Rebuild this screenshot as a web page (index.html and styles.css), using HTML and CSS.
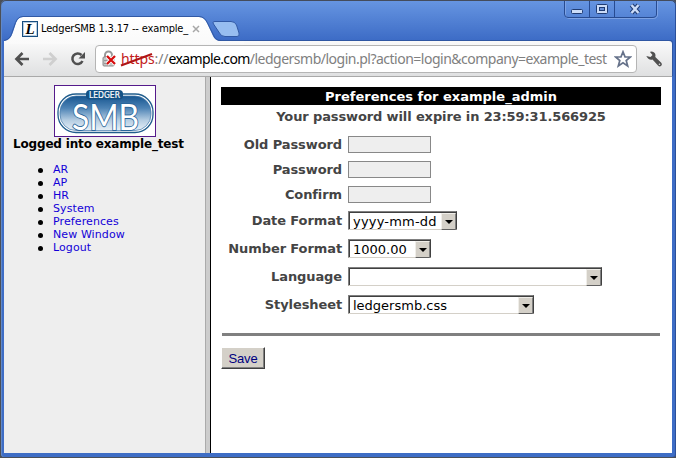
FILE: index.html
```html
<!DOCTYPE html>
<html lang="en">
<head>
<meta charset="utf-8">
<title>LedgerSMB 1.3.17 -- example_test</title>
<link rel="stylesheet" href="styles.css">
</head>
<body>
<div class="window">
  <header class="tabstrip">
    <svg class="tabshape" width="240" height="28" viewBox="0 0 240 28">
      <defs><linearGradient id="tab" x1="0" y1="0" x2="0" y2="1"><stop offset="0" stop-color="#fff"/><stop offset="1" stop-color="#fafafa"/></linearGradient></defs>
      <path d="M0 28V25C6 24 7 21 9 16L12 7Q14 1 19 1H195Q200 1 203 7L209 20Q211 25 217 25H240V28Z" fill="url(#tab)"/>
      <path d="M0 24.500C6 23 7 20 8.500 15L11.500 6.500Q14 .5 19 .5H195Q200.500 .5 203.500 7L209.500 19Q211.500 24.500 217 24.500H240" fill="none" stroke="#3159a5"/>
      <path d="M211 5.500H227Q231 5.500 232.500 9L235 17Q236 20.500 233 20.500H221Q217 20.500 215.500 17L209.500 8Q208 5.500 211 5.500Z" fill="#97bdf0" stroke="#3159a5"/>
    </svg>
    <div class="tab">
      <span class="favicon">L</span>
      <span class="tabtitle">LedgerSMB 1.3.17 -- example_</span>
      <svg class="tabclose" width="8" height="8" viewBox="0 0 8 8"><path d="M1 1L7 7M7 1L1 7" stroke="#a8a8a8" stroke-width="1.500"/></svg>
    </div>
    <svg class="winbtns" width="94" height="20" viewBox="0 0 94 20">
      <path d="M1.500 1V15Q1.500 18.500 5 18.500H89Q93.500 18.500 93.500 15V1" fill="none" stroke="#7da2e4"/>
      <path d="M.5 1V14Q.5 17.500 4 17.500H88Q92.500 17.500 92.500 14V1M25.500 1V17M50.500 1V17" fill="none" stroke="#274b91"/>
      <rect x="7.500" y="9.500" width="11" height="4" rx="1" fill="#cbdcf8" stroke="#203c73"/>
      <rect x="32.500" y="4.500" width="11" height="9" rx="1" fill="#cbdcf8" stroke="#203c73"/>
      <rect x="35.500" y="7.500" width="5" height="3" fill="#6a91d9" stroke="#203c73"/>
      <path d="M67.500 5L74.500 13M74.500 5L67.500 13" stroke="#203c73" stroke-width="4.500"/>
      <path d="M67.500 5L74.500 13M74.500 5L67.500 13" stroke="#cbdcf8" stroke-width="2.500"/>
    </svg>
  </header>
  <nav class="toolbar">
    <svg class="navicons" width="76" height="20" viewBox="0 0 76 20">
      <path d="M15 10H3M8.500 4L2.500 10L8.500 16" fill="none" stroke="#505050" stroke-width="2.700"/>
      <path d="M29 10H41M35.500 4L41.500 10L35.500 16" fill="none" stroke="#cfcfcf" stroke-width="2.700"/>
      <path d="M67.500 6A5.300 5.300 0 1 0 68.500 12" fill="none" stroke="#505050" stroke-width="2.500"/>
      <path d="M71 3V9.500H64.500Z" fill="#505050"/>
    </svg>
    <div class="omnibox">
      <svg class="lock" width="15" height="18" viewBox="0 0 15 18">
        <path d="M3 8V5A3.500 3.500 0 0 1 10 5V8" fill="none" stroke="#999" stroke-width="2"/>
        <rect x="1" y="7" width="11" height="9" rx="1" fill="#c5c5c5" stroke="#8a8a8a"/>
        <path d="M2 10.500H11M2 13.500H11" stroke="#999"/>
        <path d="M5 6L13 14M13 6L5 14" stroke="#fff" stroke-width="4"/>
        <path d="M5 6L13 14M13 6L5 14" stroke="#d60d0d" stroke-width="2.300"/>
      </svg>
      <span class="url"><span class="scheme">https<svg class="strike" width="34" height="14" viewBox="0 0 34 14"><path d="M1 12.500L32 1" stroke="#b01515" stroke-width="2"/></svg></span><span class="sep">://</span><span class="host">example.com</span>/ledgersmb/login.pl?action=login&amp;company=example_test</span>
      <svg class="star" width="18" height="18" viewBox="0 0 18 18"><path d="M9 1.800L11 6.800L16.300 7L12.200 10.500L13.700 16L9 12.800L4.300 16L5.800 10.500L1.700 7L7 6.800Z" fill="#fff" stroke="#66728a" stroke-width="1.700"/></svg>
    </div>
    <svg class="wrench" width="18" height="18" viewBox="0 0 18 18"><path d="M6 1.500Q10 1.500 10.500 5L10.300 7L16.500 13Q17.500 15 16 16Q14.500 17 13 15.500L7.500 9.500Q3.500 10.500 1.300 6L5.500 7L7.500 5L5 2Z" fill="#505050"/><circle cx="14.500" cy="14.300" r=".8" fill="#ddd"/></svg>
  </nav>
  <div class="frames">
    <aside class="sidebar">
      <svg class="logo" width="102" height="52" viewBox="0 0 102 52">
        <defs>
          <linearGradient id="pill" x1="0" y1="0" x2="0" y2="1"><stop offset="0" stop-color="#175690"/><stop offset=".35" stop-color="#4d83b5"/><stop offset=".7" stop-color="#b5cde2"/><stop offset="1" stop-color="#e7f0f7"/></linearGradient>
        </defs>
        <rect x=".5" y=".5" width="101" height="51" fill="#fff" stroke="#551a8b"/>
        <rect x="4" y="9" width="95" height="38.500" rx="18" fill="#fff" stroke="#205d8d" stroke-width="1.300"/>
        <rect x="6" y="11" width="91" height="34.500" rx="16" fill="url(#pill)" stroke="#4279aa" stroke-width=".7"/>
        <rect x="32" y="5" width="37" height="9.500" rx="4" fill="#145286"/>
        <text class="logo-top" x="35" y="12.500" textLength="31" lengthAdjust="spacingAndGlyphs">LEDGER</text>
        <text class="logo-main" x="18" y="44.500" textLength="67" lengthAdjust="spacingAndGlyphs">SMB</text>
      </svg>
      <div class="who">Logged into example_test</div>
      <ul class="menu">
        <li><a>AR</a></li><li><a>AP</a></li><li><a>HR</a></li><li><a>System</a></li><li><a>Preferences</a></li><li><a>New Window</a></li><li><a>Logout</a></li>
      </ul>
    </aside>
    <div class="divider"></div>
    <main class="main">
      <h1 class="title"><span>Preferences for example_admin</span></h1>
      <p class="expiry">Your password will expire in 23:59:31.566925</p>
      <div class="form">
        <label>Old Password</label><div class="field"></div>
        <label>Password</label><div class="field"></div>
        <label>Confirm</label><div class="field"></div>
        <label>Date Format</label><div class="select date"><span>yyyy-mm-dd</span><i class="drop"></i></div>
        <label>Number Format</label><div class="select number"><span>1000.00</span><i class="drop"></i></div>
        <label>Language</label><div class="select language"><span></span><i class="drop"></i></div>
        <label>Stylesheet</label><div class="select sheet"><span>ledgersmb.css</span><i class="drop"></i></div>
      </div>
      <div class="rule"></div>
      <button class="save">Save</button>
    </main>
  </div>
</div>
</body>
</html>
```
FILE: styles.css
```css
* { box-sizing: border-box; }
body { margin: 0; background: #4b4f57; font-family: "DejaVu Sans", sans-serif; }
svg { display: block; flex: none; }
.window {
  width: 675px; height: 457px; margin-left: 1px;
  padding: 0 4px 4px 3px;
  display: flex; flex-direction: column;
  background: linear-gradient(#6796e2 0, #3d6cc6 40px, #3e6dc5 100%);
  border-radius: 5px 5px 3px 3px;
  box-shadow: inset 0 1px #444c5c, inset 1px 0 #6189c9, inset -1px 0 #2b509b;
}
.tabstrip { position: relative; height: 41px; display: flex; justify-content: space-between; align-items: flex-start; }
.tabshape { position: absolute; left: 0; top: 16px; }
.tab { position: relative; display: flex; align-items: center; height: 16px; margin: 21px 0 0 18px; }
.favicon {
  width: 16px; height: 16px; border: 1px solid #174d80;
  background: #fff; box-shadow: inset 0 0 0 1px #b9cee0;
  font: italic bold 15px/14px "Liberation Serif", serif; text-align: center;
}
.tabtitle { width: 150px; margin-left: 3px; font: 11px/16px "DejaVu Sans Condensed", "DejaVu Sans", sans-serif; letter-spacing: -.15px; white-space: nowrap; }
.tabclose { margin-left: 1px; }
.winbtns { margin-right: 14px; }
.toolbar {
  height: 36px; display: flex; align-items: center;
  background: linear-gradient(#fafafa, #dfe0e1); border-bottom: 1px solid #a9a9a9;
  border-radius: 0 3px 0 0; box-shadow: 1px -1px #2f57a3;
}
.navicons { margin-left: 10px; }
.omnibox {
  flex: none; width: 542px; height: 28px; margin-left: 5px; padding: 0 4px 0 6px;
  display: flex; align-items: center;
  background: #fff; border: 1px solid #b5b5b5; border-radius: 4px;
}
.url { flex: 1; min-width: 0; margin-left: 4px; font: 14px/20px "Noto Sans", sans-serif; letter-spacing: -.5px; color: #808080; white-space: nowrap; }
.scheme { position: relative; color: #c22020; letter-spacing: -.1px; }
.sep { letter-spacing: -.1px; }
.strike { position: absolute; left: -1px; top: 4px; }
.host { color: #000; letter-spacing: -.62px; }
.wrench { margin-left: 8px; }
.frames { flex: 1; display: flex; background: #fff; }
.sidebar { width: 201px; background: #eee; padding-top: 8px; }
.logo { margin-left: 50px; }
.logo-top { font: 8px "DejaVu Sans", sans-serif; fill: #fff; stroke: #fff; stroke-width: .2px; }
.logo-main { font: 36px Lato, sans-serif; fill: #fff; stroke: #2b669a; stroke-width: 1.8px; paint-order: stroke; }
.who { margin: 0 0 0 9px; font-size: 12px; font-weight: bold; line-height: 15px; letter-spacing: -.17px; white-space: nowrap; }
.menu { margin: 11px 0 0; padding-left: 49px; list-style: none; font-size: 11px; line-height: 13px; }
.menu li { display: flex; align-items: center; }
.menu li::before { content: ""; width: 5px; height: 5px; margin: 1px 10px 0 -15px; border-radius: 50%; background: #000; }
.menu a { color: #1300d8; letter-spacing: .1px; }
.divider { width: 6px; background: #ccc; border-left: 1px solid #aaa; border-right: 1px solid #000; }
.main { flex: 1; padding: 10px 11px 0 10px; color: #444; }
.title { margin: 0; height: 18px; background: #000; color: #fff; font-size: 13px; line-height: 19px; text-align: center; }
.expiry { margin: 4px 0 0; height: 16px; font-size: 13px; line-height: 16px; font-weight: bold; letter-spacing: -.12px; text-align: center; white-space: nowrap; }
.form {
  display: grid; grid-template-columns: 121px 1fr; column-gap: 6px; row-gap: 9px;
  grid-template-rows: 16px 16px 16px repeat(4, 19px); align-items: center; margin-top: 11px;
}
.form label { font-size: 13px; font-weight: bold; line-height: 17px; letter-spacing: -.1px; text-align: right; white-space: nowrap; }
.field { width: 83px; height: 17px; background: #eee; border: 1px solid #888; }
.select {
  height: 19px; display: flex; justify-content: space-between; align-items: stretch;
  background: #fff; color: #000; border: 1px solid; border-color: #808080 #404040 #d4d0c8 #808080;
  box-shadow: inset 1px 1px #404040; font-size: 13px; line-height: 17px; padding: 1px 0 0 4px; white-space: nowrap;
}
.date { width: 109px; letter-spacing: .2px; }
.number { width: 83px; }
.language { width: 254px; }
.sheet { width: 186px; }
.drop {
  width: 15px; height: 17px; background: #d4d0c8; border: 1px solid; border-color: #f0eee9 #808080 #606060 #f0eee9;
  display: flex; justify-content: center; align-items: center;
}
.drop::before { content: ""; border: 4px solid transparent; border-top-color: #000; border-bottom: 0; }
.rule { height: 3px; margin: 19px 1px 0; background: #808080; }
.save {
  display: block; width: 44px; height: 22px; margin: 11px 0 0; padding: 0;
  background: #d4d0c8; border: 1px solid; border-color: #fff #404040 #404040 #fff; box-shadow: inset -1px -1px #808080;
  color: #000080; font: 13px/19px "Liberation Sans", sans-serif; letter-spacing: -.2px;
}
```
